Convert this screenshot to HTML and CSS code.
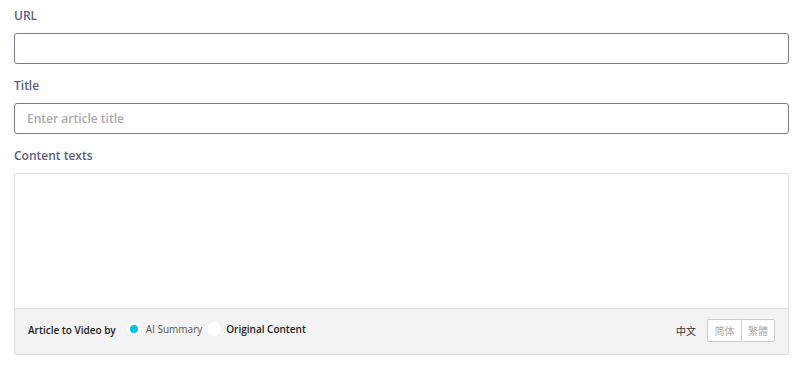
FILE: index.html
```html
<!DOCTYPE html>
<html lang="en">
<head>
  <meta charset="UTF-8">
  <meta name="viewport" content="width=device-width, initial-scale=1.0">
  <title>Article to Video</title>
  <link rel="stylesheet" href="styles.css">
</head>
<body>
  <div class="form">
    <div class="field">
      <label for="url">URL</label>
      <input type="text" id="url">
    </div>
    <div class="field">
      <label for="title">Title</label>
      <input type="text" id="title" placeholder="Enter article title">
    </div>
    <div class="field">
      <label for="content">Content texts</label>
      <div class="content-box">
        <textarea id="content"></textarea>
        <div class="content-footer">
          <span class="by">Article to Video by</span>
          <span class="option active"><span class="dot"></span>AI Summary</span>
          <span class="option"><span class="dot"></span>Original Content</span>
          <span class="lang">中文</span>
          <div class="lang-buttons">
            <button>简体</button>
            <button>繁體</button>
          </div>
        </div>
      </div>
    </div>
  </div>
</body>
</html>
```

FILE: styles.css
```css
body {
  margin: 0;
  font-family: 'Open Sans', 'Noto Sans CJK SC', sans-serif;
  background: #fff;
}
.form {
  padding: 7px 11px 0 14px;
  display: flex;
  flex-direction: column;
  gap: 13px;
}
.field {
  display: flex;
  flex-direction: column;
}
label {
  font-size: 12px;
  line-height: 18px;
  font-weight: 600;
  color: #5e5c80;
  margin-bottom: 8px;
}
input[type="text"] {
  height: 31px;
  box-sizing: border-box;
  border: 1px solid #7c7a94;
  border-radius: 3px;
  padding: 0 12px;
  font-family: inherit;
  font-size: 12px;
  font-weight: 600;
  color: #333;
  outline: none;
}
input::placeholder {
  color: #aaa;
}
.content-box {
  height: 182px;
  box-sizing: border-box;
  border: 1px solid #dcdcdc;
  border-radius: 2px;
  display: flex;
  flex-direction: column;
}
.content-box textarea {
  flex: 1;
  border: none;
  resize: none;
  outline: none;
}
.content-footer {
  height: 46px;
  box-sizing: border-box;
  background: #f3f3f3;
  border-top: 1px solid #dcdcdc;
  display: flex;
  align-items: center;
  padding: 0 13px 5px;
  font-size: 10px;
  color: #222;
}
.by {
  font-weight: 600;
  margin-right: 11px;
  margin-top: 2px;
}
.option {
  display: flex;
  align-items: center;
  gap: 5px;
  margin-right: 5px;
  font-weight: 600;
}
.option.active {
  font-weight: 400;
  color: #555;
}
.dot {
  width: 14px;
  height: 14px;
  border-radius: 50%;
  background: #fff;
  box-sizing: border-box;
}
.option.active .dot {
  border: 3px solid #fff;
  background: #00c2dc;
}
.lang {
  margin-left: auto;
  margin-right: 11px;
  margin-top: 3px;
  color: #333;
}
.lang-buttons {
  display: flex;
  margin-top: 3px;
}
.lang-buttons button {
  width: 34px;
  height: 23px;
  border: 1px solid #ccc;
  background: #fff;
  color: #aaa;
  font-size: 10px;
  font-family: inherit;
  padding: 0;
}
.lang-buttons button:first-child {
  border-radius: 2px 0 0 2px;
  border-right: none;
}
.lang-buttons button:last-child {
  border-radius: 0 2px 2px 0;
}
```
